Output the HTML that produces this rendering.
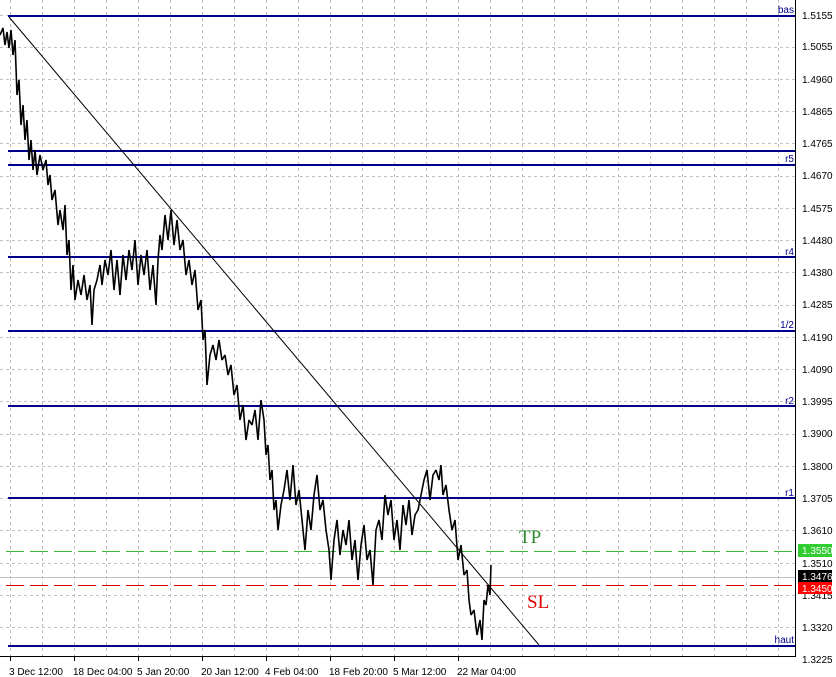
<!DOCTYPE html>
<html><head><meta charset="utf-8"><style>
html,body{margin:0;padding:0;background:#fff;}
svg{display:block;font-family:"Liberation Sans",sans-serif;}
</style></head><body>
<svg width="836" height="677" viewBox="0 0 836 677" xmlns="http://www.w3.org/2000/svg">
<rect width="836" height="677" fill="#fff"/>
<g stroke="#c0c0c0" stroke-width="1" stroke-dasharray="3,3" shape-rendering="crispEdges">
<line x1="10.5" y1="0" x2="10.5" y2="656"/><line x1="42.5" y1="0" x2="42.5" y2="656"/><line x1="74.5" y1="0" x2="74.5" y2="656"/><line x1="106.5" y1="0" x2="106.5" y2="656"/><line x1="138.5" y1="0" x2="138.5" y2="656"/><line x1="170.5" y1="0" x2="170.5" y2="656"/><line x1="202.5" y1="0" x2="202.5" y2="656"/><line x1="234.5" y1="0" x2="234.5" y2="656"/><line x1="266.5" y1="0" x2="266.5" y2="656"/><line x1="298.5" y1="0" x2="298.5" y2="656"/><line x1="330.5" y1="0" x2="330.5" y2="656"/><line x1="362.5" y1="0" x2="362.5" y2="656"/><line x1="394.5" y1="0" x2="394.5" y2="656"/><line x1="426.5" y1="0" x2="426.5" y2="656"/><line x1="458.5" y1="0" x2="458.5" y2="656"/><line x1="490.5" y1="0" x2="490.5" y2="656"/><line x1="522.5" y1="0" x2="522.5" y2="656"/><line x1="554.5" y1="0" x2="554.5" y2="656"/><line x1="586.5" y1="0" x2="586.5" y2="656"/><line x1="618.5" y1="0" x2="618.5" y2="656"/><line x1="650.5" y1="0" x2="650.5" y2="656"/><line x1="682.5" y1="0" x2="682.5" y2="656"/><line x1="714.5" y1="0" x2="714.5" y2="656"/><line x1="746.5" y1="0" x2="746.5" y2="656"/><line x1="778.5" y1="0" x2="778.5" y2="656"/>
<line x1="0" y1="15.5" x2="795" y2="15.5"/><line x1="0" y1="47.5" x2="795" y2="47.5"/><line x1="0" y1="79.5" x2="795" y2="79.5"/><line x1="0" y1="111.5" x2="795" y2="111.5"/><line x1="0" y1="143.5" x2="795" y2="143.5"/><line x1="0" y1="176.5" x2="795" y2="176.5"/><line x1="0" y1="208.5" x2="795" y2="208.5"/><line x1="0" y1="240.5" x2="795" y2="240.5"/><line x1="0" y1="272.5" x2="795" y2="272.5"/><line x1="0" y1="305.5" x2="795" y2="305.5"/><line x1="0" y1="337.5" x2="795" y2="337.5"/><line x1="0" y1="369.5" x2="795" y2="369.5"/><line x1="0" y1="401.5" x2="795" y2="401.5"/><line x1="0" y1="434.5" x2="795" y2="434.5"/><line x1="0" y1="466.5" x2="795" y2="466.5"/><line x1="0" y1="498.5" x2="795" y2="498.5"/><line x1="0" y1="530.5" x2="795" y2="530.5"/><line x1="0" y1="563.5" x2="795" y2="563.5"/><line x1="0" y1="595.5" x2="795" y2="595.5"/><line x1="0" y1="627.5" x2="795" y2="627.5"/>
</g>
<line x1="0" y1="577.5" x2="795" y2="577.5" stroke="#c0c0c0" shape-rendering="crispEdges"/>
<line x1="6" y1="551.5" x2="795" y2="551.5" stroke="#3cb83c" stroke-dasharray="18,6" shape-rendering="crispEdges"/>
<line x1="6" y1="585.5" x2="795" y2="585.5" stroke="#e00000" stroke-dasharray="18,6" shape-rendering="crispEdges"/>
<g stroke="#00008b" stroke-width="2" shape-rendering="crispEdges">
<line x1="8" y1="16" x2="795" y2="16"/><line x1="8" y1="151" x2="795" y2="151"/><line x1="8" y1="165" x2="795" y2="165"/><line x1="8" y1="257" x2="795" y2="257"/><line x1="8" y1="331" x2="795" y2="331"/><line x1="8" y1="406" x2="795" y2="406"/><line x1="8" y1="498" x2="795" y2="498"/><line x1="8" y1="646" x2="795" y2="646"/>
</g>
<g fill="#00008b" font-size="10" text-anchor="end">
<text x="794" y="13">bas</text><text x="794" y="162">r5</text><text x="794" y="255">r4</text><text x="794" y="328">1/2</text><text x="794" y="404">r2</text><text x="794" y="496">r1</text><text x="794" y="643">haut</text>
</g>
<line x1="9" y1="17" x2="539" y2="645" stroke="#000" stroke-width="1"/>
<polyline fill="none" stroke="#000" stroke-width="1.6" stroke-linejoin="bevel" points="0,35 3,28 5,45 7,32 9,48 11,30 13,55 15,40 17,95 19,80 21,125 23,105 25,140 27,120 29,160 31,140 33,170 35,150 37,175 40,155 43,170 46,160 48,185 50,175 52,200 55,190 58,225 60,210 63,230 65,205 67,255 69,240 71,290 73,265 75,300 78,280 81,295 84,275 87,300 90,285 92,325 94,290 97,280 100,265 102,285 105,260 108,275 111,250 114,290 117,260 120,295 123,255 126,280 129,250 132,270 135,240 138,285 141,255 144,275 147,250 150,290 153,265 156,305 158,260 160,235 162,250 165,215 168,240 171,210 174,245 177,220 180,250 183,240 186,275 189,260 192,285 195,270 198,310 201,300 203,340 205,330 207,385 210,355 213,345 216,360 219,340 222,360 225,355 228,375 231,365 234,395 237,385 240,420 243,405 246,440 249,420 252,425 255,410 258,440 261,400 264,420 266,455 268,445 270,480 272,470 274,510 276,500 278,530 281,505 284,490 287,470 290,500 293,465 296,505 299,490 302,520 305,550 308,510 311,530 314,495 317,475 320,510 323,500 326,530 329,550 331,580 334,540 337,520 340,555 343,530 346,545 349,520 352,560 355,540 358,580 361,545 364,525 367,560 370,550 373,585 376,530 379,520 382,540 385,495 388,515 391,500 394,540 397,520 400,550 403,505 406,525 409,500 412,535 415,515 418,510 421,495 424,480 427,470 430,500 433,475 436,470 439,480 441,465 443,495 446,485 449,510 452,530 455,520 458,560 461,545 464,575 467,570 469,600 471,615 474,610 477,635 480,620 482,640 484,600 486,605 488,585 490,595 491,565"/>
<line x1="795.5" y1="0" x2="795.5" y2="657" stroke="#000" shape-rendering="crispEdges"/>
<line x1="0" y1="656.5" x2="796" y2="656.5" stroke="#000" shape-rendering="crispEdges"/>
<g font-size="10" fill="#000">
<text x="802" y="19">1.5155</text><text x="802" y="50">1.5055</text><text x="802" y="83">1.4960</text><text x="802" y="115">1.4865</text><text x="802" y="147">1.4765</text><text x="802" y="179">1.4670</text><text x="802" y="212">1.4575</text><text x="802" y="244">1.4480</text><text x="802" y="276">1.4380</text><text x="802" y="308">1.4285</text><text x="802" y="341">1.4190</text><text x="802" y="373">1.4090</text><text x="802" y="405">1.3995</text><text x="802" y="437">1.3900</text><text x="802" y="470">1.3800</text><text x="802" y="502">1.3705</text><text x="802" y="534">1.3610</text><text x="802" y="567">1.3510</text><text x="802" y="599">1.3415</text><text x="802" y="631">1.3320</text><text x="802" y="663">1.3225</text>
</g>
<rect x="798" y="544" width="34" height="13" fill="#32cd32"/>
<text x="802" y="554" font-size="10" fill="#fff">1.3550</text>
<rect x="798" y="570" width="34" height="12" fill="#000"/>
<text x="802" y="580" font-size="10" fill="#fff">1.3476</text>
<rect x="798" y="582" width="34" height="12" fill="#f00"/>
<text x="802" y="592" font-size="10" fill="#fff">1.3450</text>
<g stroke="#000" shape-rendering="crispEdges">
<line x1="10.5" y1="657" x2="10.5" y2="661"/><line x1="74.5" y1="657" x2="74.5" y2="661"/><line x1="138.5" y1="657" x2="138.5" y2="661"/><line x1="202.5" y1="657" x2="202.5" y2="661"/><line x1="266.5" y1="657" x2="266.5" y2="661"/><line x1="330.5" y1="657" x2="330.5" y2="661"/><line x1="394.5" y1="657" x2="394.5" y2="661"/><line x1="458.5" y1="657" x2="458.5" y2="661"/>
</g>
<g font-size="10" fill="#000">
<text x="9" y="675">3 Dec 12:00</text><text x="73" y="675">18 Dec 04:00</text><text x="137" y="675">5 Jan 20:00</text><text x="201" y="675">20 Jan 12:00</text><text x="265" y="675">4 Feb 04:00</text><text x="329" y="675">18 Feb 20:00</text><text x="393" y="675">5 Mar 12:00</text><text x="457" y="675">22 Mar 04:00</text>
</g>
<text x="519" y="543" font-size="19" fill="#2e8b2e" font-family="Liberation Serif,serif">TP</text>
<text x="527" y="608" font-size="19" fill="#e00000" font-family="Liberation Serif,serif">SL</text>
</svg>
</body></html>
